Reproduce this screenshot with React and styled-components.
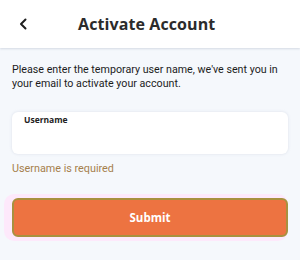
import React from "react";
import styled, { createGlobalStyle } from "styled-components";

const Global = createGlobalStyle`
  html, body { margin: 0; padding: 0; background: #f5f8fc; }
  body { font-family: Roboto, "Noto Sans", sans-serif; }
`;

const Page = styled.div`
  width: 300px;
  height: 260px;
  background: #f5f8fc;
  overflow: hidden;
`;

const Header = styled.header`
  height: 48px;
  background: #ffffff;
  display: flex;
  align-items: center;
  box-shadow: 0 1px 2px rgba(150, 160, 180, 0.35);
  position: relative;
`;

const BackButton = styled.button`
  border: none;
  background: none;
  padding: 0;
  margin-left: 16px;
  width: 14px;
  height: 14px;
  display: flex;
  align-items: center;
  justify-content: center;
  color: #1e1e1e;
`;

const Title = styled.h1`
  margin: 0 0 0 48px;
  font-family: "Open Sans", sans-serif;
  font-size: 16px;
  font-weight: 700;
  color: #2b2b2b;
  letter-spacing: 0.1px;
`;

const Body = styled.main`
  padding: 15px 12px 0 12px;
  display: flex;
  flex-direction: column;
`;

const Intro = styled.p`
  margin: 0;
  font-size: 10.7px;
  line-height: 14px;
  color: #1c1c1c;
`;

const Card = styled.div`
  margin-top: 21px;
  height: 42px;
  background: #ffffff;
  border-radius: 6px;
  box-shadow: 0 0 3px rgba(160, 170, 190, 0.3);
  padding: 2px 12px 0 12px;
  box-sizing: border-box;
`;

const Label = styled.label`
  display: block;
  font-family: "Open Sans", sans-serif;
  font-size: 8.5px;
  line-height: 12px;
  font-weight: 700;
  color: #222;
`;

const ErrorText = styled.div`
  margin-top: 8px;
  font-size: 10.8px;
  line-height: 14px;
  color: #a5804c;
`;

const SubmitButton = styled.button`
  margin-top: 22px;
  height: 39px;
  border: 2px solid #a8913f;
  border-radius: 6px;
  background: #ed7341;
  color: #ffffff;
  font-family: "Open Sans", sans-serif;
  font-size: 11.5px;
  font-weight: 700;
  box-shadow: -4px 0 0 4px #fde9fb;
  cursor: pointer;
`;

export default function App() {
  return (
    <Page>
      <Global />
      <Header>
        <BackButton aria-label="Back">
          <svg width="10" height="12" viewBox="0 0 10 12" fill="none">
            <path d="M7.5 1.5 L3 6 L7.5 10.5" stroke="#1e1e1e" strokeWidth="2" strokeLinecap="round" strokeLinejoin="round" />
          </svg>
        </BackButton>
        <Title>Activate Account</Title>
      </Header>
      <Body>
        <Intro>
          Please enter the temporary user name, we've sent you in your email to activate your account.
        </Intro>
        <Card>
          <Label>Username</Label>
        </Card>
        <ErrorText>Username is required</ErrorText>
        <SubmitButton>Submit</SubmitButton>
      </Body>
    </Page>
  );
}
